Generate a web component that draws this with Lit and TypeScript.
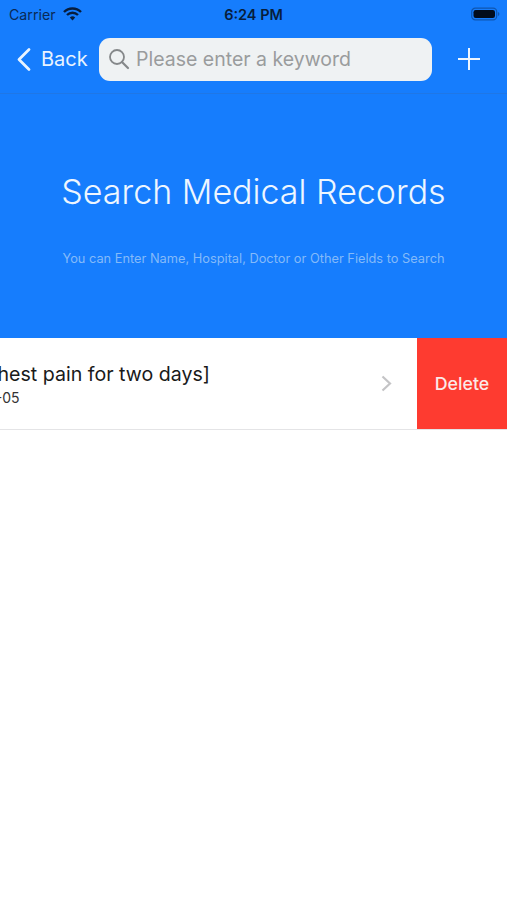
import { LitElement, html, css } from 'lit';
import { customElement } from 'lit/decorators.js';

@customElement('app-root')
export class AppRoot extends LitElement {
  static styles = css`
    :host {
      display: block;
      width: 507px;
      height: 900px;
      overflow: hidden;
      background: #fff;
      font-family: Inter, 'Liberation Sans', sans-serif;
    }

    .top {
      background: #167dfd;
      height: 338px;
      display: flex;
      flex-direction: column;
    }

    .status {
      height: 28px;
      padding: 0 7px 0 9px;
      display: flex;
      align-items: center;
      justify-content: space-between;
      color: #0a2a55;
      font-size: 14.2px;
      position: relative;
    }

    .status__left {
      display: flex;
      align-items: center;
      gap: 7px;
    }

    .status__time {
      position: absolute;
      left: 0;
      right: 0;
      text-align: center;
      font-weight: 600;
      color: #071d3c;
      font-size: 14.5px;
    }

    .nav {
      height: 66px;
      padding: 0 27px 3px 16px;
      box-sizing: border-box;
      display: flex;
      align-items: center;
      border-bottom: 1px solid #1f77e6;
    }

    .back {
      display: flex;
      align-items: center;
      gap: 10px;
      width: 83px;
      color: #e8f3ff;
      font-size: 20px;
    }

    .search {
      flex: 1;
      height: 43px;
      border-radius: 11px;
      background: #eff2f3;
      display: flex;
      align-items: center;
      gap: 6px;
      padding: 0 9px;
      color: #9a9c9d;
      font-size: 19.5px;
    }

    .plus {
      margin-left: 26px;
      display: flex;
    }

    .hero {
      flex: 1;
      display: flex;
      flex-direction: column;
      align-items: center;
      padding-top: 75px;
    }

    .hero__title {
      color: #eef6ff;
      font-size: 34px;
      font-weight: 300;
      line-height: 46px;
    }

    .hero__sub {
      margin-top: 35px;
      color: #84baf9;
      font-size: 12.8px;
      line-height: 18px;
    }

    .row {
      height: 92px;
      display: flex;
      box-sizing: border-box;
      border-bottom: 1px solid #e4e4e6;
    }

    .row__main {
      flex: 1;
      min-width: 0;
      overflow: hidden;
      display: flex;
      align-items: center;
      padding-right: 25px;
    }

    .row__text {
      flex: 1;
      min-width: 0;
      display: flex;
      flex-direction: column;
      align-items: flex-start;
      padding-top: 1px;
    }

    .row__title {
      color: #1a1a1a;
      font-size: 19.6px;
      line-height: 26px;
      white-space: nowrap;
      margin-left: -24px;
    }

    .row__date {
      color: #333;
      font-size: 14px;
      line-height: 20px;
      margin-top: 1px;
      white-space: nowrap;
      margin-left: -60px;
    }

    .delete {
      width: 90px;
      height: 91px;
      padding-bottom: 1px;
      box-sizing: border-box;
      background: #fe3b30;
      color: #fbe9e7;
      font-size: 17.8px;
      font-weight: 500;
      display: flex;
      align-items: center;
      justify-content: center;
    }
  `;

  render() {
    return html`
      <div class="top">
        <div class="status">
          <div class="status__left">
            <span>Carrier</span>
            <svg width="19" height="14" viewBox="0 0 19 14">
              <path d="M1 5a12 12 0 0 1 17 0M4 8a8 8 0 0 1 11 0" fill="none" stroke="#071d3c" stroke-width="2.4" />
              <path d="M6.8 10.4a4 4 0 0 1 5.4 0L9.5 13.4z" fill="#071d3c" />
            </svg>
          </div>
          <div class="status__time">6:24 PM</div>
          <svg width="29" height="14" viewBox="0 0 29 14">
            <rect x="0.7" y="1.2" width="25" height="11.6" rx="3.6" fill="none" stroke="#0f56b0" stroke-width="1.2" />
            <rect x="2.5" y="3" width="21.5" height="8" rx="2.2" fill="#020c1c" />
            <path d="M27 5v4a2 2 0 0 0 1.4-2A2 2 0 0 0 27 5z" fill="#0f56b0" />
          </svg>
        </div>
        <div class="nav">
          <div class="back">
            <svg width="15" height="25" viewBox="0 0 15 25">
              <path d="M13 2.5 3 12.5l10 10" fill="none" stroke="#e8f3ff" stroke-width="2.8" stroke-linecap="round" stroke-linejoin="round" />
            </svg>
            <span>Back</span>
          </div>
          <div class="search">
            <svg width="22" height="22" viewBox="0 0 22 22">
              <circle cx="9" cy="9" r="7" fill="none" stroke="#85888a" stroke-width="1.8" />
              <path d="m14 14 6 6" fill="none" stroke="#85888a" stroke-width="2.2" stroke-linecap="round" />
            </svg>
            <span>Please enter a keyword</span>
          </div>
          <div class="plus">
            <svg width="22" height="22" viewBox="0 0 22 22">
              <path d="M11 0v22M0 11h22" stroke="#eef6ff" stroke-width="2" fill="none" />
            </svg>
          </div>
        </div>
        <div class="hero">
          <div class="hero__title">Search Medical Records</div>
          <div class="hero__sub">You can Enter Name, Hospital, Doctor or Other Fields to Search</div>
        </div>
      </div>
      <div class="row">
        <div class="row__main">
          <div class="row__text">
            <div class="row__title">[Chest pain for two days]</div>
            <div class="row__date">2020-01-05</div>
          </div>
          <svg width="11" height="17" viewBox="0 0 11 17">
            <path d="M1.5 1.5 9 8.5l-7.5 7" fill="none" stroke="#c4c4c6" stroke-width="2.2" />
          </svg>
        </div>
        <div class="delete">Delete</div>
      </div>
    `;
  }
}
